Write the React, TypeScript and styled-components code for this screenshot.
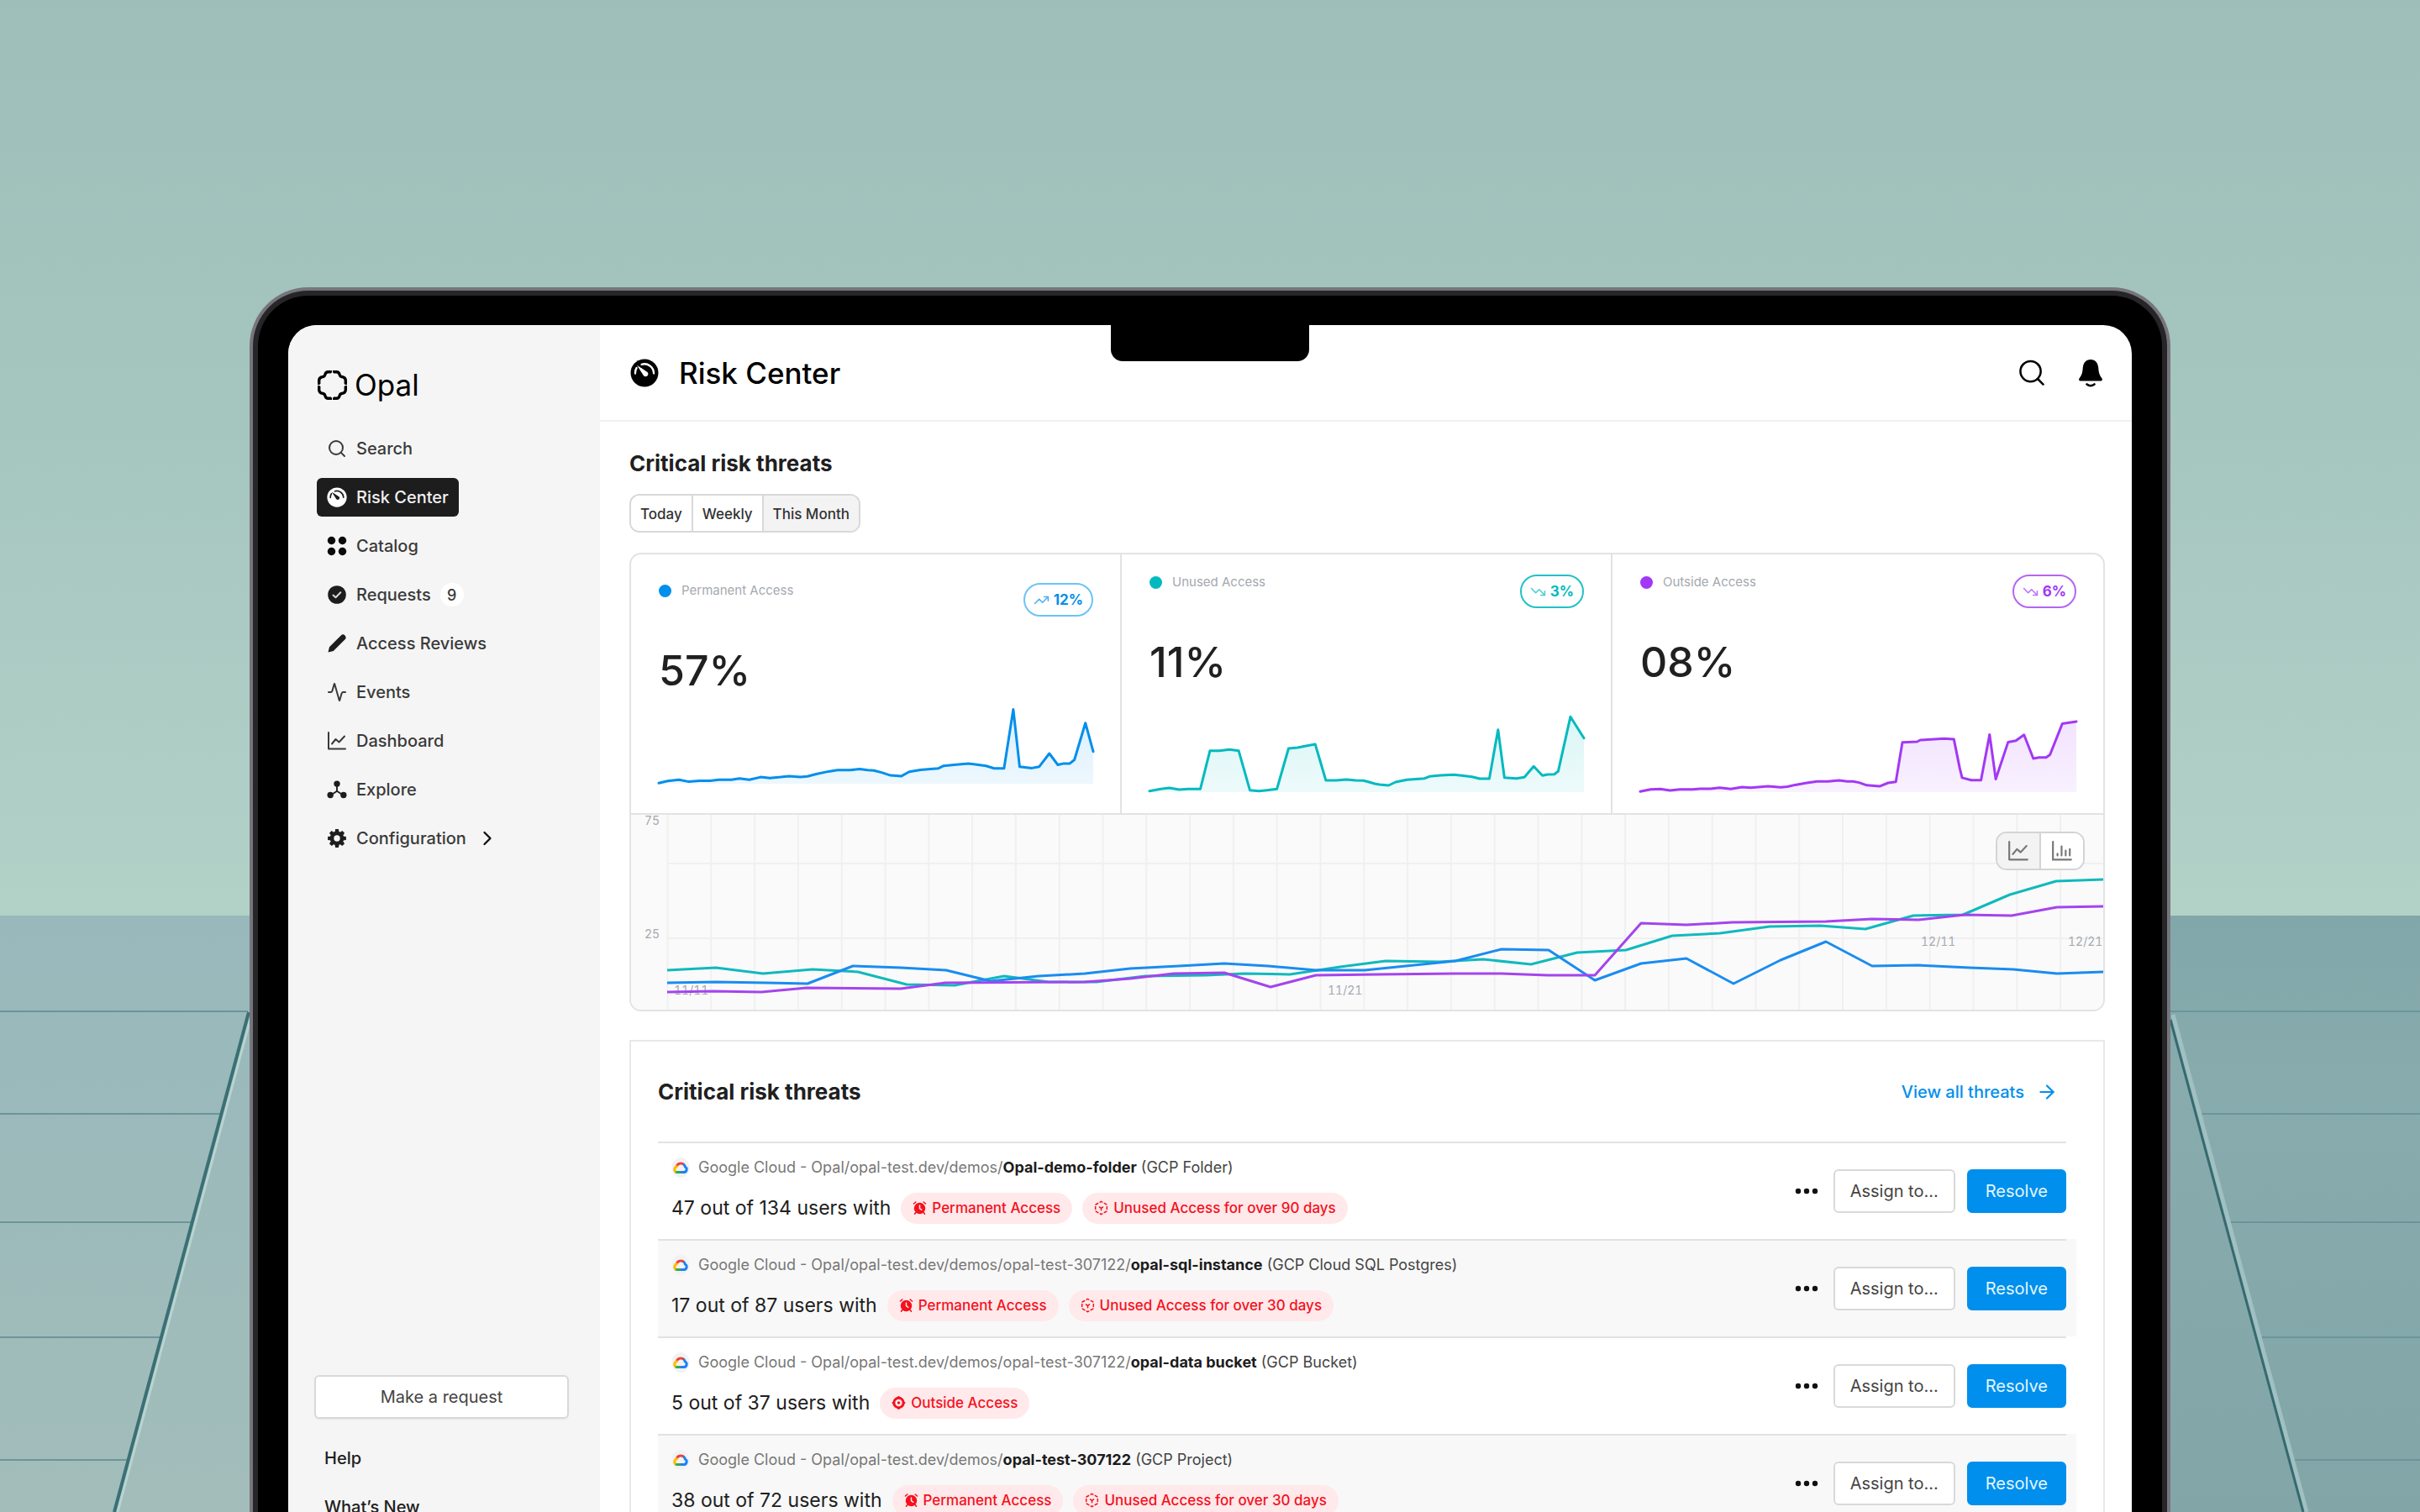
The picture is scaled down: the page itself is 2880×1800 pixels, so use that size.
import React from "react";
import styled, { createGlobalStyle, css } from "styled-components";
import {
  Activity,
  ArrowRight,
  ChevronRight,
  Search,
  TrendingDown,
  TrendingUp,
} from "lucide-react";

const GlobalStyle = createGlobalStyle`
  *, *::before, *::after { box-sizing: border-box; }
  body {
    margin: 0;
    background: #a8c8c2;
    color: #202020;
    font-family: Inter, "Liberation Sans", Arial, sans-serif;
    font-size: 20px;
    -webkit-font-smoothing: antialiased;
  }
  button { font: inherit; color: inherit; margin: 0; cursor: pointer; }
  a { color: inherit; text-decoration: none; }
  h1, h2, p, ul { margin: 0; padding: 0; }
  ul { list-style: none; }
`;

const palette = {
  blue: "#008fec",
  teal: "#00babf",
  purple: "#a238f5",
  red: "#f5101c",
  line: "#e3e3e3",
  muted: "#a5a9b0",
};

/* ---------- scene ---------- */

const Scene = styled.div`
  position: relative;
  height: 100vh;
  overflow: hidden;
  padding: 342px 297px 0;
`;

const Backdrop = styled.svg`
  position: absolute;
  inset: 0;
  width: 100%;
  height: 100%;
`;

const Laptop = styled.div`
  position: relative;
  padding: 6px 6px 0;
  border: 4px solid #77757c;
  border-bottom: 0;
  border-radius: 70px 70px 0 0;
  background: #262628;
`;

const Bezel = styled.div`
  padding: 35px 36px 0;
  border-radius: 60px 60px 0 0;
  background: #000;
`;

const Screen = styled.div`
  position: relative;
  display: grid;
  grid-template-columns: 371px minmax(0, 1fr);
  overflow: hidden;
  border-radius: 34px 34px 0 0;
  background: #fff;
`;

const Notch = styled.div`
  position: absolute;
  top: 0;
  left: 50%;
  width: 236px;
  height: 43px;
  margin-left: -118px;
  border-radius: 0 0 14px 14px;
  background: #000;
`;

/* ---------- sidebar ---------- */

const Sidebar = styled.aside`
  display: flex;
  flex-direction: column;
  padding: 50px 31px 0 34px;
  background: #f5f5f5;
`;

const Brand = styled.a`
  display: flex;
  align-items: center;
  gap: 8px;
  height: 42px;
  margin-bottom: 32px;
  color: #000;
  font-size: 35px;
  line-height: 42px;
`;

const NavList = styled.ul`
  display: flex;
  flex-direction: column;
  align-items: flex-start;
  gap: 12px;
`;

const NavLink = styled.a<{ $active?: boolean }>`
  display: flex;
  align-items: center;
  gap: 11px;
  height: 46px;
  padding: 0 12px;
  border-radius: 6px;
  font-size: 20px;
  font-weight: 500;
  color: #3a3a3a;
  svg { flex: none; }
  ${(p) =>
    p.$active &&
    css`
      background: #1d1d1d;
      color: #f0f0f0;
    `}
`;

const Count = styled.span`
  display: grid;
  place-items: center;
  width: 28px;
  height: 28px;
  border-radius: 50%;
  background: #fff;
  font-size: 18px;
`;

const SidebarFooter = styled.div`
  display: flex;
  flex-direction: column;
  margin-top: auto;
`;

const FooterLink = styled.a`
  padding-left: 9px;
  font-size: 20px;
  font-weight: 500;
  line-height: 58px;
`;

/* ---------- buttons ---------- */

const Button = styled.button<{ $primary?: boolean }>`
  height: 52px;
  padding: 0 ${(p) => (p.$primary ? 20 : 18)}px;
  border: 2px solid ${(p) => (p.$primary ? palette.blue : "#d9d9d9")};
  border-radius: 6px;
  background: ${(p) => (p.$primary ? palette.blue : "#fff")};
  color: ${(p) => (p.$primary ? "#e2f6ff" : "#444")};
  font-size: 20px;
  line-height: 24px;
`;

const RequestButton = styled(Button)`
  margin: 0 6px 18px -3px;
  box-shadow: 0 1px 2px rgba(0, 0, 0, 0.06);
`;

const IconButton = styled.button`
  display: grid;
  place-items: center;
  padding: 0;
  border: 0;
  background: none;
`;

/* ---------- main ---------- */

const Main = styled.main`
  display: flex;
  flex-direction: column;
`;

const TopBar = styled.header`
  display: flex;
  align-items: center;
  justify-content: space-between;
  height: 115px;
  padding: 0 34px 0 36px;
  border-bottom: 2px solid #f0f0f0;
  color: #000;
`;

const TitleGroup = styled.div`
  display: flex;
  align-items: center;
  gap: 24px;
`;

const Title = styled.h1`
  font-size: 35px;
  font-weight: 500;
  line-height: 40px;
`;

const TopActions = styled.div`
  display: flex;
  align-items: center;
  gap: 40px;
`;

const Content = styled.div`
  display: flex;
  flex-direction: column;
  padding: 34px 32px 0 35px;
`;

const SectionTitle = styled.h2`
  font-size: 26px;
  font-weight: 700;
  line-height: 32px;
`;

const Segments = styled.div`
  display: flex;
  align-self: flex-start;
  height: 46px;
  margin: 20px 0 24px;
  overflow: hidden;
  border: 2px solid #d8d8d8;
  border-radius: 12px;
`;

const Segment = styled.button<{ $active?: boolean }>`
  display: grid;
  place-items: center;
  padding: 2px 11px 0;
  border: 0;
  background: ${(p) => (p.$active ? "#f3f3f3" : "#fff")};
  font-size: 17px;
  font-weight: 500;
  color: #333;
  & + & { border-left: 2px solid #d8d8d8; }
`;

const MetricsPanel = styled.section`
  overflow: hidden;
  border: 2px solid ${palette.line};
  border-radius: 14px;
`;

const MetricRow = styled.div`
  display: grid;
  grid-template-columns: repeat(3, minmax(0, 1fr));
  border-bottom: 2px solid ${palette.line};
`;

const MetricCard = styled.article<{ $inset: number }>`
  display: flex;
  flex-direction: column;
  height: 308px;
  padding: ${(p) => p.$inset}px 32px ${(p) => p.$inset + 1}px 33px;
  &:not(:last-child) { border-right: 2px solid ${palette.line}; }
`;

const MetricHead = styled.div`
  display: flex;
  align-items: flex-start;
  justify-content: space-between;
`;

const MetricLabel = styled.p`
  display: flex;
  align-items: center;
  gap: 12px;
  color: ${palette.muted};
  font-size: 15px;
  line-height: 18px;
`;

const Dot = styled.i<{ $color: string }>`
  width: 15px;
  height: 15px;
  border-radius: 50%;
  background: ${(p) => p.$color};
`;

const Trend = styled.span<{ $edge: string; $color: string }>`
  display: flex;
  align-items: center;
  gap: 5px;
  height: 40px;
  padding: 0 10px;
  border: 2px solid ${(p) => p.$edge};
  border-radius: 20px;
  color: ${(p) => p.$color};
  font-size: 17px;
  font-weight: 700;
  svg { opacity: 0.7; }
`;

const MetricValue = styled.p`
  margin-top: 36px;
  font-size: 50px;
  font-weight: 500;
  line-height: 56px;
`;

const Spark = styled.svg`
  width: 100%;
  height: 100px;
  margin-top: auto;
  overflow: visible;
`;

const ChartArea = styled.div`
  position: relative;
  background: #fafafa;
`;

const ChartSvg = styled.svg`
  display: block;
  width: 100%;
  height: auto;
  overflow: visible;
  font-size: 14px;
  font-variant-numeric: tabular-nums;
  fill: ${palette.muted};
`;

const ChartToggle = styled.div`
  position: absolute;
  top: 20px;
  right: 22px;
  display: flex;
  height: 46px;
  overflow: hidden;
  border: 2px solid #d4d4d4;
  border-radius: 13px;
  color: #777;
`;

const ToggleOption = styled.button<{ $active?: boolean }>`
  display: grid;
  place-items: center;
  width: 50px;
  padding: 0;
  border: 0;
  background: ${(p) => (p.$active ? "#f3f3f3" : "#fff")};
  & + & { width: 52px; border-left: 2px solid #d4d4d4; }
`;

/* ---------- threats ---------- */

const ThreatsPanel = styled.section`
  margin-top: 34px;
  padding: 0 32px;
  border: 2px solid #e8e8e8;
  border-bottom: 0;
`;

const ThreatsHead = styled.div`
  display: flex;
  align-items: center;
  justify-content: space-between;
  height: 119px;
  padding-right: 22px;
`;

const ViewAll = styled.a`
  display: flex;
  align-items: center;
  gap: 14px;
  color: ${palette.blue};
  font-size: 20px;
  font-weight: 500;
`;

const ThreatItem = styled.li`
  padding-right: 12px;
  &:nth-child(even) { background: #f8f8f8; }
`;

const ThreatRow = styled.div`
  display: flex;
  align-items: center;
  justify-content: space-between;
  height: 116px;
  padding-left: 16px;
  border-top: 2px solid #e2e2e2;
`;

const ThreatInfo = styled.div`
  display: flex;
  flex-direction: column;
  gap: 17px;
  padding-bottom: 3px;
`;

const ThreatPath = styled.p`
  display: flex;
  align-items: center;
  gap: 10px;
  color: #777;
  font-size: 18px;
  line-height: 26px;
  b { color: #1c1c1c; font-weight: 700; }
  em { color: #444; font-style: normal; }
`;

const ThreatSummary = styled.div`
  display: flex;
  align-items: center;
  gap: 12px;
  height: 37px;
  font-size: 23px;
`;

const Tag = styled.span`
  display: flex;
  align-items: center;
  gap: 6px;
  height: 37px;
  padding: 0 14px;
  border-radius: 19px;
  background: #ffe9eb;
  color: ${palette.red};
  font-size: 17px;
  font-weight: 500;
`;

const Actions = styled.div`
  display: flex;
  align-items: center;
  gap: 14px;
`;

const MoreButton = styled(IconButton)`
  width: 36px;
  height: 36px;
`;

/* ---------- icons ---------- */

const GaugeIcon = ({ size, ink, cut }: { size: number; ink: string; cut: string }) => (
  <svg width={size} height={size} viewBox="0 0 32 32" aria-hidden="true">
    <circle cx="16" cy="16" r="15.5" fill={ink} />
    <path d="M5.6 16.5a10.4 10.4 0 0 1 1.6-6.2" fill="none" stroke={cut} strokeWidth="2.2" strokeLinecap="round" />
    <path d="M12.8 6.4a10.6 10.6 0 0 1 13.6 10" fill="none" stroke={cut} strokeWidth="2.2" strokeLinecap="round" />
    <path d="M7.6 7.2 18.2 14.4a2.9 2.9 0 1 1-3.6 4Z" fill={cut} />
  </svg>
);

const OpalMark = () => (
  <svg width="37" height="37" viewBox="-18.5 -18.5 37 37" aria-hidden="true">
    <path
      d="M-5-15.800H5Q8-15.800 8.600-12.500Q9-10.500 11-10Q15.800-9.500 15.800-5.500V5.500Q15.800 9.500 11 10Q9 10.500 8.600 12.500Q8 15.800 5 15.800H-5Q-8 15.800-8.600 12.500Q-9 10.500-11 10Q-15.800 9.500-15.800 5.500V-5.500Q-15.800-9.500-11-10Q-9-10.500-8.600-12.500Q-8-15.800-5-15.800Z"
      fill="none"
      stroke="#000"
      strokeWidth="3.400"
      strokeLinejoin="round"
    />
    <path d="M0-14.800V-13.500M0 14.800V13.500M-14.800 0H-13.500M14.800 0H13.500" stroke="#f5f5f5" strokeWidth="3" />
    <path d="M0-19V-13M0 19V13M-19 0H-13M19 0H13" stroke="#f5f5f5" strokeWidth="1" />
  </svg>
);

const CatalogIcon = () => (
  <svg width="24" height="24" viewBox="0 0 24 24" aria-hidden="true">
    {[5.5, 18.5].map((x) => [5.5, 18.5].map((y) => <circle key={x + "-" + y} cx={x} cy={y} r="4.7" fill="#0b0b0b" />))}
  </svg>
);

const CheckIcon = () => (
  <svg width="24" height="24" viewBox="0 0 24 24" fill="none" aria-hidden="true">
    <circle cx="12" cy="12" r="10.8" fill="#1d1d1d" />
    <path d="m7.500 12.500 3 2.800 5.800-6" stroke="#d8d8d8" strokeWidth="2" strokeLinecap="round" strokeLinejoin="round" />
  </svg>
);

const PencilIcon = () => (
  <svg width="24" height="24" viewBox="0 0 24 24" aria-hidden="true">
    <path d="M1.500 22.500 3 16.200 16.800 2.400a3.400 3.400 0 0 1 4.800 4.800L7.800 21Z" fill="#1d1d1d" />
  </svg>
);

const LineChartIcon = ({ size = 24 }: { size?: number }) => (
  <svg width={size} height={size} viewBox="0 0 24 24" fill="none" stroke="currentColor" strokeWidth="2" strokeLinecap="round" strokeLinejoin="round" aria-hidden="true">
    <path d="M2 2v19.500h20" />
    <path d="m6 15.500 4.500-5.500 4 3.500L21 6.500" />
  </svg>
);

const BarChartIcon = ({ size = 24 }: { size?: number }) => (
  <svg width={size} height={size} viewBox="0 0 24 24" fill="none" stroke="currentColor" strokeWidth="2" strokeLinecap="round" aria-hidden="true">
    <path d="M2 2v19.500h20M7 17v-2M11.500 17V7M16 17v-5.500M20.500 17v-7" />
  </svg>
);

const NodesIcon = () => (
  <svg width="24" height="24" viewBox="0 0 26 24" fill="#1d1d1d" aria-hidden="true">
    <path d="M13 5v9L4.500 19.500M13 14l8.500 5.500" fill="none" stroke="#1d1d1d" strokeWidth="2" />
    <circle cx="13" cy="4.500" r="4" />
    <circle cx="4.500" cy="19" r="4" />
    <circle cx="21.500" cy="19" r="4" />
  </svg>
);

const GearIcon = () => (
  <svg width="24" height="24" viewBox="-12 -12 24 24" aria-hidden="true">
    <circle r="6" fill="none" stroke="#1d1d1d" strokeWidth="4.600" />
    {[0, 45, 90, 135, 180, 225, 270, 315].map((a) => (
      <path key={a} d="M-2.600-7 -1.900-10.900H1.900L2.600-7Z" fill="#1d1d1d" transform={`rotate(${a})`} />
    ))}
  </svg>
);

const BellIcon = () => (
  <svg width="30" height="34" viewBox="0 0 30 34" fill="#000" aria-hidden="true">
    <path d="M15 1C9.500 1 6.300 5 5.800 10.500 5.300 17 4.500 19.500 1.500 23.500 .6 25 1.200 26.500 2.800 26.500H27.200C28.800 26.500 29.400 25 28.500 23.500 25.500 19.500 24.700 17 24.200 10.500 23.700 5 20.500 1 15 1Z" />
    <path d="M10.500 30.500Q15 34 19.500 30.500" fill="none" stroke="#000" strokeWidth="2.600" strokeLinecap="round" />
  </svg>
);

const SearchGlyph = () => (
  <svg width="30" height="31" viewBox="0 0 31 32" fill="none" stroke="#000" strokeWidth="2.600" strokeLinecap="round" aria-hidden="true">
    <circle cx="14" cy="14.500" r="12.500" />
    <path d="m23 24 6.500 6.500" />
  </svg>
);

const CloudIcon = () => (
  <svg width="22" height="26" viewBox="0 0 22 26" fill="none" strokeWidth="3" aria-hidden="true">
    <ellipse cx="11" cy="13" rx="10.500" ry="12" fill="#f2f2f2" />
    <path d="M6.200 11.600A5.400 5.400 0 0 1 15 9.400" stroke="#ea4335" />
    <path d="M14.600 9A5.400 5.400 0 0 1 16.300 12A3.500 3.500 0 0 1 15.500 18.500H11" stroke="#1a82f7" />
    <path d="M11 18.500H7A3.500 3.500 0 0 1 4.600 17.600" stroke="#34a853" />
    <path d="M5.200 18A3.500 3.500 0 0 1 7.500 11.700" stroke="#fbbc05" />
  </svg>
);

const AlarmIcon = () => (
  <svg width="17" height="18" viewBox="0 0 17 18" fill="none" stroke="#f5101c" strokeLinecap="round" aria-hidden="true">
    <circle cx="8.500" cy="9.500" r="6.700" fill="#f5101c" stroke="none" />
    <path d="M1.500 4 3.800 2M15.500 4 13.200 2M3.800 14.500 2.500 16.200M13.200 14.500 14.500 16.200" strokeWidth="1.600" />
    <path d="M8.500 6v3.700l2.300 1.600" stroke="#ffe9eb" strokeWidth="1.500" />
  </svg>
);

const UnusedIcon = () => (
  <svg width="17" height="18" viewBox="0 0 17 18" fill="none" stroke="#f5101c" strokeWidth="1.500" strokeLinecap="round" aria-hidden="true">
    <path d="M8.500 1.300 15.300 5.200V12.800L8.500 16.700 1.700 12.800V5.200Z" strokeDasharray="3 2.800" strokeDashoffset="1.500" />
    <path d="M8.500 9.300v2.500M8.500 9.300 6.500 8M8.500 9.300l2-1.300" />
  </svg>
);

const OutsideIcon = () => (
  <svg width="17" height="18" viewBox="0 0 17 18" fill="none" aria-hidden="true">
    <circle cx="8.500" cy="9" r="5.700" stroke="#f5101c" strokeWidth="3" />
    <circle cx="8.500" cy="9" r="1.700" fill="#f5101c" />
    <path d="M8.500 1v2M8.500 15v2M.7 9h2M14.300 9h2" stroke="#f5101c" strokeWidth="2" />
  </svg>
);

const DotsIcon = () => (
  <svg width="28" height="8" viewBox="0 0 28 8" fill="#111" aria-hidden="true">
    <circle cx="4" cy="4" r="3.200" />
    <circle cx="14" cy="4" r="3.200" />
    <circle cx="24" cy="4" r="3.200" />
  </svg>
);

/* ---------- data ---------- */

type Point = [number, number];

interface Metric {
  id: string;
  label: string;
  value: string;
  change: string;
  up?: boolean;
  color: string;
  edge: string;
  inset: number;
  domain: Point;
  points: Point[];
}

const metrics: Metric[] = [
  {
    id: "permanent",
    label: "Permanent Access",
    value: "57%",
    change: "12%",
    up: true,
    color: palette.blue,
    edge: "#6cc3f6",
    inset: 34,
    domain: [1228, 253],
    points: [
      [0, 2], [25, 8], [57, 12], [85, 6], [115, 9], [145, 9], [170, 12], [205, 12], [228, 16], [256, 12], [288, 20],
      [314, 17], [345, 20], [368, 23], [400, 20], [420, 22], [445, 29], [480, 37], [505, 41], [540, 41], [568, 44],
      [590, 41], [608, 40], [630, 34], [655, 25], [686, 23], [708, 36], [740, 42], [790, 46], [805, 54], [835, 57],
      [875, 61], [895, 58], [925, 54], [948, 46], [976, 46], [1002, 224], [1020, 51], [1055, 47], [1075, 51],
      [1104, 91], [1128, 57], [1145, 61], [1162, 61], [1175, 72], [1206, 183], [1228, 97],
    ],
  },
  {
    id: "unused",
    label: "Unused Access",
    value: "11%",
    change: "3%",
    color: palette.teal,
    edge: "#22c0c8",
    inset: 24,
    domain: [1350, 300],
    points: [
      [0, 4], [35, 11], [62, 15], [92, 9], [120, 11], [158, 11], [188, 148], [218, 148], [248, 152], [277, 148],
      [312, 7], [340, 4], [365, 7], [396, 11], [432, 156], [460, 159], [490, 166], [515, 171], [548, 42], [580, 42],
      [612, 45], [640, 42], [665, 41], [680, 37], [700, 30], [715, 27], [743, 24], [765, 36], [800, 44], [855, 49],
      [870, 56], [905, 60], [945, 62], [970, 59], [1002, 55], [1026, 48], [1056, 48], [1083, 223], [1103, 52],
      [1140, 49], [1165, 53], [1194, 92], [1221, 59], [1237, 63], [1258, 64], [1270, 74], [1308, 269], [1350, 193],
    ],
  },
  {
    id: "outside",
    label: "Outside Access",
    value: "08%",
    change: "6%",
    color: palette.purple,
    edge: "#b566f0",
    inset: 24,
    domain: [1126, 245],
    points: [
      [0, 2], [27, 8], [52, 9], [77, 5], [102, 8], [135, 8], [155, 10], [182, 10], [205, 13], [234, 9], [263, 15],
      [285, 13], [330, 17], [363, 14], [380, 16], [400, 21], [430, 27], [457, 31], [485, 31], [513, 34], [535, 31],
      [550, 31], [565, 28], [585, 20], [618, 17], [640, 27], [660, 30], [677, 145], [715, 147], [723, 152],
      [785, 156], [810, 154], [825, 70], [831, 42], [855, 35], [880, 35], [902, 168], [918, 38], [950, 146],
      [970, 150], [991, 167], [1015, 98], [1030, 101], [1048, 101], [1058, 109], [1090, 200], [1126, 206],
    ],
  },
];

const trendLines: { color: string; points: Point[] }[] = [
  {
    color: "#10b9bd",
    points: [
      [43, 185], [101, 182], [157, 189], [216, 184], [270, 187], [328, 202], [385, 203], [444, 192], [497, 199],
      [554, 199], [612, 192], [684, 191], [730, 189], [784, 190], [844, 181], [898, 174], [962, 175], [1014, 172],
      [1071, 178], [1126, 164], [1184, 161], [1239, 144], [1296, 141], [1355, 133], [1415, 132], [1469, 136],
      [1526, 120], [1585, 119], [1641, 95], [1696, 79], [1752, 77],
    ],
  },
  {
    color: "#1a8cf0",
    points: [
      [43, 200], [101, 199], [161, 200], [210, 201], [264, 180], [321, 182], [375, 185], [428, 198], [485, 192],
      [540, 189], [594, 183], [652, 180], [706, 177], [758, 180], [815, 185], [873, 185], [981, 174], [1036, 160],
      [1092, 161], [1147, 197], [1202, 177], [1256, 171], [1312, 201], [1368, 173], [1422, 151], [1477, 180],
      [1532, 179], [1593, 182], [1645, 184], [1697, 189], [1752, 187],
    ],
  },
  {
    color: "#a444ee",
    points: [
      [43, 211], [98, 210], [155, 211], [209, 206], [321, 207], [374, 200], [540, 199], [594, 195], [646, 189],
      [706, 188], [761, 205], [815, 191], [889, 190], [981, 189], [1036, 189], [1091, 191], [1147, 191], [1202, 129],
      [1256, 131], [1311, 128], [1422, 127], [1477, 124], [1532, 125], [1587, 119], [1643, 120], [1697, 110],
      [1752, 109],
    ],
  },
];

const axisLabels = [
  { text: "75", x: 16, y: 12 },
  { text: "25", x: 16, y: 147 },
  { text: "11/11", x: 51, y: 214 },
  { text: "11/21", x: 829, y: 214 },
  { text: "12/11", x: 1535, y: 156 },
  { text: "12/21", x: 1710, y: 156 },
];

type TagKind = "permanent" | "unused" | "outside";

interface Threat {
  path: string;
  name: string;
  kind: string;
  summary: string;
  tags: { kind: TagKind; text: string }[];
}

const threats: Threat[] = [
  {
    path: "Google Cloud - Opal/opal-test.dev/demos/",
    name: "Opal-demo-folder",
    kind: "(GCP Folder)",
    summary: "47 out of 134 users with",
    tags: [
      { kind: "permanent", text: "Permanent Access" },
      { kind: "unused", text: "Unused Access for over 90 days" },
    ],
  },
  {
    path: "Google Cloud - Opal/opal-test.dev/demos/opal-test-307122/",
    name: "opal-sql-instance",
    kind: "(GCP Cloud SQL Postgres)",
    summary: "17 out of 87 users with",
    tags: [
      { kind: "permanent", text: "Permanent Access" },
      { kind: "unused", text: "Unused Access for over 30 days" },
    ],
  },
  {
    path: "Google Cloud - Opal/opal-test.dev/demos/opal-test-307122/",
    name: "opal-data bucket",
    kind: "(GCP Bucket)",
    summary: "5 out of 37 users with",
    tags: [{ kind: "outside", text: "Outside Access" }],
  },
  {
    path: "Google Cloud - Opal/opal-test.dev/demos/",
    name: "opal-test-307122",
    kind: "(GCP Project)",
    summary: "38 out of 72 users with",
    tags: [
      { kind: "permanent", text: "Permanent Access" },
      { kind: "unused", text: "Unused Access for over 30 days" },
    ],
  },
];

const tagIcons: Record<TagKind, React.ReactNode> = {
  permanent: <AlarmIcon />,
  unused: <UnusedIcon />,
  outside: <OutsideIcon />,
};

const navItems: { label: string; icon: React.ReactNode; active?: boolean; count?: number; more?: boolean }[] = [
  { label: "Search", icon: <Search size={24} strokeWidth={2} /> },
  { label: "Risk Center", icon: <GaugeIcon size={24} ink="#fff" cut="#1d1d1d" />, active: true },
  { label: "Catalog", icon: <CatalogIcon /> },
  { label: "Requests", icon: <CheckIcon />, count: 9 },
  { label: "Access Reviews", icon: <PencilIcon /> },
  { label: "Events", icon: <Activity size={24} strokeWidth={2} /> },
  { label: "Dashboard", icon: <LineChartIcon /> },
  { label: "Explore", icon: <NodesIcon /> },
  { label: "Configuration", icon: <GearIcon />, more: true },
];

/* ---------- pieces ---------- */

const SparkLine = ({ metric }: { metric: Metric }) => {
  const [w, h] = metric.domain;
  const line = metric.points
    .map(([x, y]) => `${((x / w) * 518).toFixed(1)},${(100 - (y / h) * 100).toFixed(1)}`)
    .join(" ");
  const gradientId = `fill-${metric.id}`;
  return (
    <Spark viewBox="0 0 518 100" preserveAspectRatio="none" role="img" aria-label={`${metric.label} trend`}>
      <defs>
        <linearGradient id={gradientId} x1="0" y1="0" x2="0" y2="1">
          <stop offset="0" stopColor={metric.color} stopOpacity="0.14" />
          <stop offset="1" stopColor={metric.color} stopOpacity="0.07" />
        </linearGradient>
      </defs>
      <polygon points={`0,100 ${line} 518,100`} fill={`url(#${gradientId})`} />
      <polyline points={line} fill="none" stroke={metric.color} strokeWidth="3" strokeLinejoin="round" strokeLinecap="round" />
    </Spark>
  );
};

const plankSeams = [1204, 1326, 1455, 1592, 1738];

const Room = () => (
  <Backdrop viewBox="0 0 2880 1800" preserveAspectRatio="none" aria-hidden="true">
    <defs>
      <linearGradient id="wall" x1="0" y1="0" x2="0" y2="1">
        <stop offset="0" stopColor="#9ebeb9" />
        <stop offset="0.5" stopColor="#a6c6c0" />
        <stop offset="1" stopColor="#b2d2c8" />
      </linearGradient>
      <linearGradient id="floorLeft" x1="0" y1="0" x2="0" y2="1">
        <stop offset="0" stopColor="#98b8bb" />
        <stop offset="1" stopColor="#a2bdba" />
      </linearGradient>
      <linearGradient id="floorRight" x1="0" y1="0" x2="0" y2="1">
        <stop offset="0" stopColor="#82a7aa" />
        <stop offset="0.3" stopColor="#88acad" />
        <stop offset="1" stopColor="#82a5a7" />
      </linearGradient>
    </defs>
    <rect width="2880" height="1090" fill="url(#wall)" />
    <rect y="1090" width="1440" height="710" fill="url(#floorLeft)" />
    <rect x="1440" y="1090" width="1440" height="710" fill="url(#floorRight)" />
    {plankSeams.map((y) => {
      const inset = (y - 1204) * 0.27;
      return (
        <path
          key={y}
          d={`M0 ${y}H${295 - inset}M${2583 + inset} ${y}H2880`}
          stroke="#6b959a"
          strokeWidth="2"
          fill="none"
        />
      );
    })}
    <path d="M300 1205 140 1800" stroke="#b9d3d1" strokeWidth="3" />
    <path d="M296 1205 136 1800" stroke="#3a7075" strokeWidth="4" />
    <path d="M2586 1208 2745 1800" stroke="#a0c0c1" strokeWidth="5" />
    <path d="M2583 1214 2741 1800" stroke="#356a70" strokeWidth="3" />
  </Backdrop>
);

const TrendChart = () => (
  <ChartSvg viewBox="0 0 1752 232" role="img" aria-label="Access by day">
    <g stroke="#f0f0f0" strokeWidth="2">
      {Array.from({ length: 33 }, (_, i) => (
        <path key={i} d={`M${(43.5 + i * 51.8).toFixed(1)} 0V232`} />
      ))}
      <path d="M43 58H1752M43 147H1752" />
    </g>
    {axisLabels.map((l) => (
      <text key={l.text} x={l.x} y={l.y}>
        {l.text}
      </text>
    ))}
    {trendLines.map((s) => (
      <polyline
        key={s.color}
        points={s.points.map((p) => p.join(",")).join(" ")}
        fill="none"
        stroke={s.color}
        strokeWidth="3"
        strokeLinejoin="round"
      />
    ))}
  </ChartSvg>
);

export default function App() {
  return (
    <>
      <GlobalStyle />
      <Scene>
        <Room />
        <Laptop>
          <Bezel>
            <Screen>
              <Sidebar>
                <Brand href="#">
                  <OpalMark />
                  Opal
                </Brand>
                <nav aria-label="Main">
                  <NavList>
                    {navItems.map((item) => (
                      <li key={item.label}>
                        <NavLink href="#" $active={item.active} aria-current={item.active ? "page" : undefined}>
                          {item.icon}
                          {item.label}
                          {item.count && <Count>{item.count}</Count>}
                          {item.more && <ChevronRight size={28} color="#111" strokeWidth={2} />}
                        </NavLink>
                      </li>
                    ))}
                  </NavList>
                </nav>
                <SidebarFooter>
                  <RequestButton type="button">Make a request</RequestButton>
                  <FooterLink href="#">Help</FooterLink>
                  <FooterLink href="#">What’s New</FooterLink>
                </SidebarFooter>
              </Sidebar>
              <Main>
                <TopBar>
                  <TitleGroup>
                    <GaugeIcon size={34} ink="#000" cut="#fff" />
                    <Title>Risk Center</Title>
                  </TitleGroup>
                  <TopActions>
                    <IconButton type="button" aria-label="Search">
                      <SearchGlyph />
                    </IconButton>
                    <IconButton type="button" aria-label="Notifications">
                      <BellIcon />
                    </IconButton>
                  </TopActions>
                </TopBar>
                <Content>
                  <SectionTitle>Critical risk threats</SectionTitle>
                  <Segments role="group" aria-label="Period">
                    <Segment type="button">Today</Segment>
                    <Segment type="button">Weekly</Segment>
                    <Segment type="button" $active>
                      This Month
                    </Segment>
                  </Segments>
                  <MetricsPanel>
                    <MetricRow>
                      {metrics.map((m) => (
                        <MetricCard key={m.id} $inset={m.inset}>
                          <MetricHead>
                            <MetricLabel>
                              <Dot $color={m.color} />
                              {m.label}
                            </MetricLabel>
                            <Trend $edge={m.edge} $color={m.color}>
                              {m.up ? <TrendingUp size={19} strokeWidth={2} /> : <TrendingDown size={19} strokeWidth={2} />}
                              {m.change}
                            </Trend>
                          </MetricHead>
                          <MetricValue>{m.value}</MetricValue>
                          <SparkLine metric={m} />
                        </MetricCard>
                      ))}
                    </MetricRow>
                    <ChartArea>
                      <TrendChart />
                      <ChartToggle role="group" aria-label="Chart type">
                        <ToggleOption type="button" $active aria-label="Line chart">
                          <LineChartIcon size={26} />
                        </ToggleOption>
                        <ToggleOption type="button" aria-label="Bar chart">
                          <BarChartIcon size={26} />
                        </ToggleOption>
                      </ChartToggle>
                    </ChartArea>
                  </MetricsPanel>
                  <ThreatsPanel>
                    <ThreatsHead>
                      <SectionTitle>Critical risk threats</SectionTitle>
                      <ViewAll href="#">
                        View all threats
                        <ArrowRight size={26} strokeWidth={2} />
                      </ViewAll>
                    </ThreatsHead>
                    <ul>
                      {threats.map((t) => (
                        <ThreatItem key={t.name}>
                          <ThreatRow>
                            <ThreatInfo>
                              <ThreatPath>
                                <CloudIcon />
                                <span>
                                  {t.path}
                                  <b>{t.name}</b> <em>{t.kind}</em>
                                </span>
                              </ThreatPath>
                              <ThreatSummary>
                                {t.summary}
                                {t.tags.map((tag) => (
                                  <Tag key={tag.kind}>
                                    {tagIcons[tag.kind]}
                                    {tag.text}
                                  </Tag>
                                ))}
                              </ThreatSummary>
                            </ThreatInfo>
                            <Actions>
                              <MoreButton type="button" aria-label="More options">
                                <DotsIcon />
                              </MoreButton>
                              <Button type="button">Assign to...</Button>
                              <Button type="button" $primary>
                                Resolve
                              </Button>
                            </Actions>
                          </ThreatRow>
                        </ThreatItem>
                      ))}
                    </ul>
                  </ThreatsPanel>
                </Content>
              </Main>
              <Notch />
            </Screen>
          </Bezel>
        </Laptop>
      </Scene>
    </>
  );
}
